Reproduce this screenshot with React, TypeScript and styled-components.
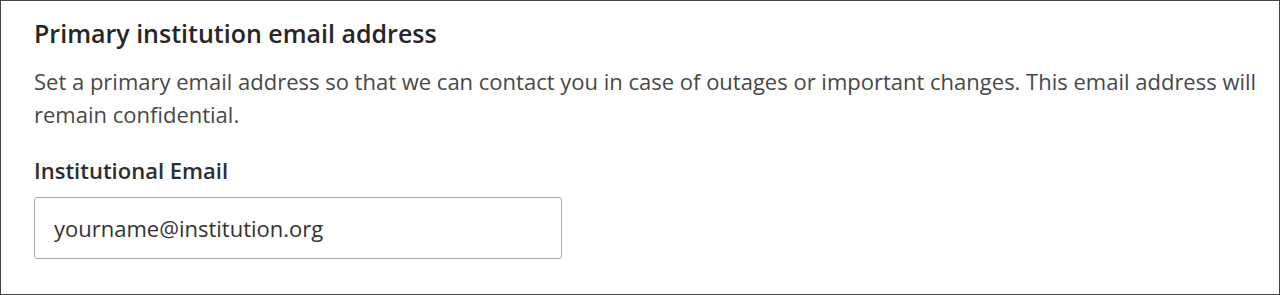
import styled, { createGlobalStyle } from 'styled-components';

const GlobalStyle = createGlobalStyle`
  html, body {
    margin: 0;
    padding: 0;
    background: #ffffff;
  }
  body {
    font-family: 'Open Sans', 'Noto Sans', sans-serif;
  }
`;

export default function App() {
  return (
    <>
      <GlobalStyle />
      <Panel>
        <Title>Primary institution email address</Title>
        <Description>
          Set a primary email address so that we can contact you in case of outages or important
          changes. This email address will remain confidential.
        </Description>
        <Field>
          <Label htmlFor="inst-email">Institutional Email</Label>
          <Input id="inst-email" type="email" defaultValue="yourname@institution.org" />
        </Field>
      </Panel>
    </>
  );
}

const Panel = styled.section`
  box-sizing: border-box;
  width: 1280px;
  height: 295px;
  border: 1px solid #444444;
  background: #ffffff;
  padding: 15px 16px 0 33px;
`;

const Title = styled.h2`
  margin: 0;
  font-size: 25px;
  font-weight: 600;
  line-height: 34px;
  color: #262626;
`;

const Description = styled.p`
  margin: 15px 0 0;
  font-size: 22px;
  font-weight: 400;
  line-height: 33px;
  color: #484848;
`;

const Field = styled.div`
  display: flex;
  flex-direction: column;
  align-items: flex-start;
  margin-top: 24px;
`;

const Label = styled.label`
  font-size: 22px;
  font-weight: 600;
  line-height: 30px;
  color: #2e2e2e;
`;

const Input = styled.input`
  box-sizing: border-box;
  margin-top: 12px;
  width: 528px;
  height: 62px;
  padding: 0 19px;
  border: 1px solid #a9a9a9;
  border-radius: 3px;
  font-family: 'Open Sans', 'Noto Sans', sans-serif;
  font-size: 22px;
  color: #333333;
  background: #ffffff;
  outline: none;
`;
